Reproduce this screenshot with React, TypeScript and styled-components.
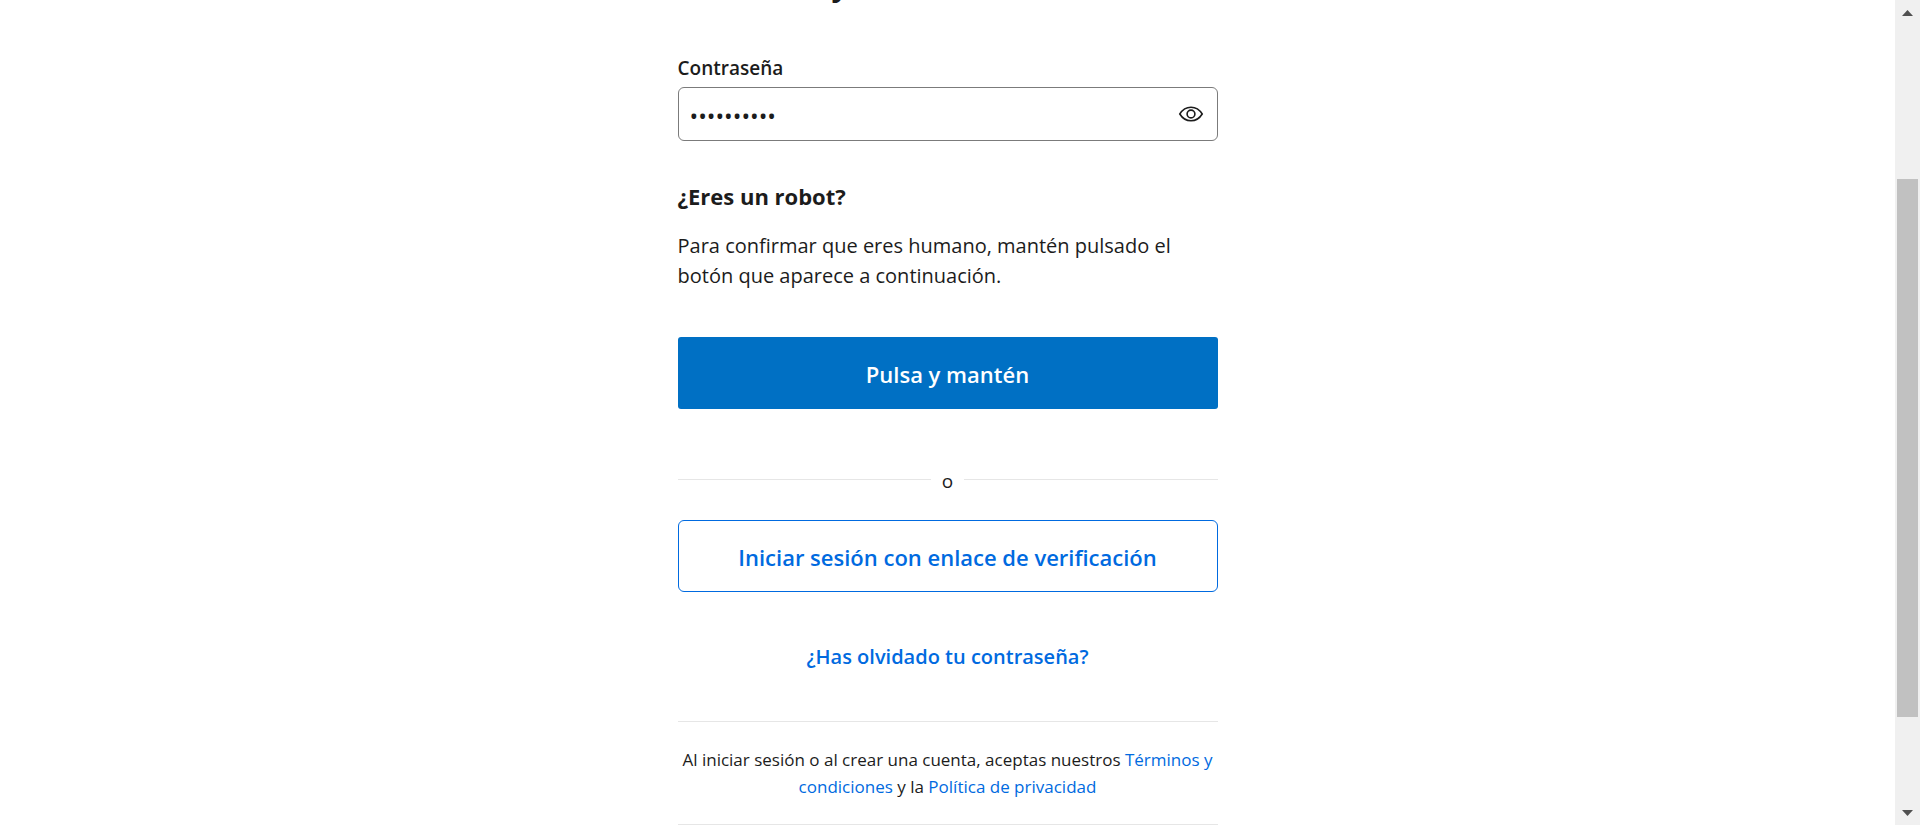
import React, { useState } from "react";
import styled, { createGlobalStyle } from "styled-components";

const GlobalStyle = createGlobalStyle`
  *, *::before, *::after { box-sizing: border-box; }
  body {
    margin: 0;
    background: #fff;
    color: #1c1c1c;
    font-family: "Open Sans", "Noto Sans", sans-serif;
  }
`;

const Page = styled.div`
  display: flex;
  height: 100vh;
  overflow: hidden;
`;

const Content = styled.main`
  flex: 1;
  display: flex;
  justify-content: center;
  align-items: flex-start;
`;

const Column = styled.form`
  width: 100%;
  max-width: 540px;
  display: flex;
  flex-direction: column;
`;

const ScrolledTitle = styled.h1`
  display: flex;
  align-items: flex-end;
  height: 5px;
  margin: 0;
  padding-left: 154px;
  overflow: hidden;
  font-size: 30px;
  line-height: 40px;
  font-weight: 700;
`;

const Label = styled.label`
  margin-top: 48px;
  font-size: 19px;
  line-height: 30px;
  font-weight: 600;
`;

const Field = styled.div`
  display: flex;
  align-items: center;
  height: 54px;
  margin-top: 4px;
  padding: 0 12px 0 11px;
  border: 1px solid #7b7b7b;
  border-radius: 6px;
`;

const PasswordInput = styled.input`
  flex: 1;
  min-width: 0;
  padding: 4px 0 0;
  border: 0;
  outline: 0;
  background: transparent;
  color: inherit;
  font-family: inherit;
  font-size: 23px;
  line-height: 30px;
`;

const IconButton = styled.button`
  display: flex;
  padding: 0;
  border: 0;
  background: none;
  color: #1c1c1c;
  cursor: pointer;
`;

const SubHeading = styled.h2`
  margin: 40px 0 0;
  font-size: 22px;
  line-height: 30px;
  font-weight: 700;
`;

const Paragraph = styled.p`
  margin: 20px 0 0;
  font-size: 20px;
  line-height: 30px;
`;

const ActionButton = styled.button<{ $outline?: boolean }>`
  height: 72px;
  padding: 2px 0 0;
  border: ${(p) => (p.$outline ? "1px solid #006ae0" : "0")};
  border-radius: ${(p) => (p.$outline ? "6px" : "3px")};
  background: ${(p) => (p.$outline ? "#fff" : "#0070c4")};
  color: ${(p) => (p.$outline ? "#006ae0" : "#fff")};
  font-family: inherit;
  font-size: 22px;
  line-height: 30px;
  font-weight: 600;
  cursor: pointer;
`;

const ButtonSlot = styled.div`
  display: grid;
  margin-top: 46px;
`;

const Divider = styled.div`
  display: flex;
  align-items: center;
  margin: 56px 0 26px;

  &::before, &::after {
    content: "";
    flex: 1;
    height: 1px;
    background: #e6e6e6;
  }
`;

const DividerText = styled.span`
  padding: 3px 11px 0;
  font-size: 19px;
  line-height: 26px;
`;

const ForgotLink = styled.a`
  align-self: center;
  margin-top: 50px;
  color: #006ae0;
  font-size: 20px;
  line-height: 30px;
  font-weight: 600;
  text-decoration: none;
`;

const Legal = styled.p`
  margin: 49px 0 0;
  padding: 24px 0;
  border: solid #e6e6e6;
  border-width: 1px 0;
  font-size: 17px;
  line-height: 27px;
  text-align: center;
`;

const LegalLink = styled.a`
  color: #006ae0;
  text-decoration: none;
`;

const ScrollBar = styled.div`
  flex: none;
  display: flex;
  flex-direction: column;
  width: 25px;
  background: #f0f0f0;
`;

const ScrollArrow = styled.button`
  flex: none;
  display: flex;
  align-items: center;
  justify-content: center;
  height: 25px;
  padding: 0;
  border: 0;
  background: none;
`;

const ScrollTrack = styled.div`
  flex: 1;
  display: grid;
  grid-template-rows: 154fr 538fr 83fr;
  padding: 0 2px;
`;

const ScrollThumb = styled.div`
  grid-row: 2;
  background: #c1c1c1;
`;

export default function App() {
  const [password, setPassword] = useState("contrasena");
  const [visible, setVisible] = useState(false);

  return (
    <>
      <GlobalStyle />
      <Page>
        <Content>
          <Column onSubmit={(e) => e.preventDefault()}>
            <ScrolledTitle>y</ScrolledTitle>
            <Label htmlFor="password">Contraseña</Label>
            <Field>
              <PasswordInput
                id="password"
                type={visible ? "text" : "password"}
                value={password}
                onChange={(e) => setPassword(e.target.value)}
              />
              <IconButton type="button" aria-label="Mostrar contraseña" onClick={() => setVisible(!visible)}>
                <svg width="28" height="28" viewBox="0 0 28 28" fill="none" stroke="currentColor" strokeWidth="1.6">
                  <path d="M2.8 14C5.6 9.4 9.4 7.2 14 7.2S22.4 9.4 25.2 14C22.4 18.6 18.6 20.8 14 20.8S5.6 18.6 2.8 14Z" />
                  <circle cx="14" cy="14" r="3.9" />
                </svg>
              </IconButton>
            </Field>
            <SubHeading>¿Eres un robot?</SubHeading>
            <Paragraph>Para confirmar que eres humano, mantén pulsado el botón que aparece a continuación.</Paragraph>
            <ButtonSlot>
              <ActionButton type="button">Pulsa y mantén</ActionButton>
            </ButtonSlot>
            <Divider>
              <DividerText>o</DividerText>
            </Divider>
            <ActionButton type="button" $outline>
              Iniciar sesión con enlace de verificación
            </ActionButton>
            <ForgotLink href="#">¿Has olvidado tu contraseña?</ForgotLink>
            <Legal>
              Al iniciar sesión o al crear una cuenta, aceptas nuestros{" "}
              <LegalLink href="#">Términos y condiciones</LegalLink> y la{" "}
              <LegalLink href="#">Política de privacidad</LegalLink>
            </Legal>
          </Column>
        </Content>
        <ScrollBar>
          <ScrollArrow type="button" aria-label="Desplazar hacia arriba">
            <svg width="11" height="6" viewBox="0 0 11 6" fill="#505050"><path d="M0 6L5.5 0L11 6Z" /></svg>
          </ScrollArrow>
          <ScrollTrack>
            <ScrollThumb />
          </ScrollTrack>
          <ScrollArrow type="button" aria-label="Desplazar hacia abajo">
            <svg width="11" height="6" viewBox="0 0 11 6" fill="#505050"><path d="M0 0L5.5 6L11 0Z" /></svg>
          </ScrollArrow>
        </ScrollBar>
      </Page>
    </>
  );
}
